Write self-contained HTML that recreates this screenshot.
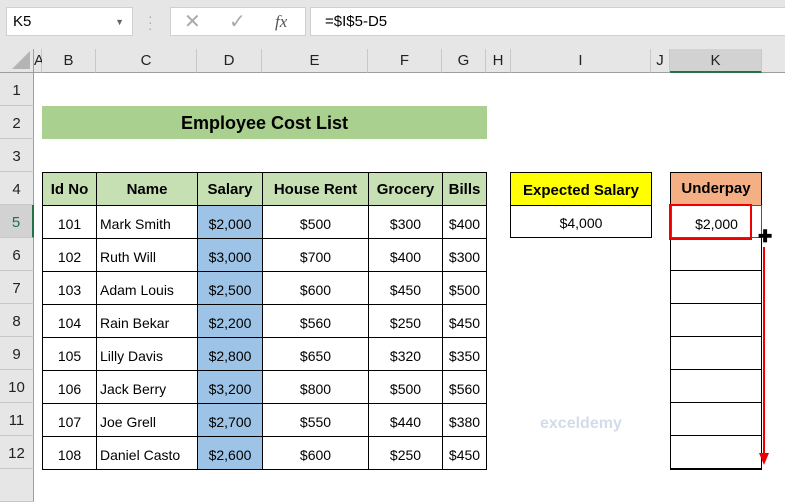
<!DOCTYPE html><html><head><style>
body{margin:0;width:785px;height:485px;overflow:hidden;background:#fff;font-family:"Liberation Sans",Calibri,sans-serif;position:relative}
.a{position:absolute;box-sizing:border-box}
.top{left:0;top:0;width:785px;height:49px;background:#e6e6e6}
.ch{top:49px;height:24px;background:#e6e6e6;border-right:1px solid #c8c8c8;border-bottom:1px solid #9e9e9e;font-size:15px;text-align:center;line-height:24px;color:#222}
.rh{left:0;width:34px;height:33px;background:#e6e6e6;border-bottom:1px solid #c8c8c8;border-right:1px solid #9e9e9e;font-size:15px;text-align:center;line-height:36px;color:#222}
.g{display:grid;grid-template-columns:53px 100px 64px 105px 73px 43px;grid-auto-rows:32px;gap:1px;padding:1px;background:#000}
.g div{background:#fff;font-size:14px;line-height:36px;text-align:center;white-space:nowrap;overflow:hidden}
.g .h{background:#c6e0b4;font-weight:bold;font-size:15px;line-height:33px}
.g .l{text-align:left;padding-left:3px}
.g .s{background:#9dc3e6}
</style></head><body>
<div class="a top"></div>
<div class="a" style="left:6px;top:7px;width:127px;height:29px;background:#fff;border:1px solid #d0d0d0;font-size:15px;line-height:28px;padding-left:6px">K5<span style="position:absolute;right:8px;top:0;font-size:9px;color:#666">▼</span></div>
<div class="a" style="left:148px;top:13px;color:#aaa;font-size:14px;line-height:6px">·<br>·<br>·</div>
<div class="a" style="left:170px;top:7px;width:136px;height:29px;background:#fff;border:1px solid #d0d0d0;color:#aaa;font-size:20px;line-height:28px"><span style="position:absolute;left:13px">✕</span><span style="position:absolute;left:58px">✓</span><span style="position:absolute;left:104px;font-family:'Liberation Serif';font-style:italic;color:#555;font-size:17px">fx</span></div>
<div class="a" style="left:310px;top:7px;width:480px;height:29px;background:#fff;border:1px solid #d0d0d0;font-size:15px;line-height:28px;padding-left:14px">=$I$5-D5</div>
<div class="a" style="left:0;top:49px;width:34px;height:24px;background:#e6e6e6;border-right:1px solid #9e9e9e;border-bottom:1px solid #9e9e9e"><div style="position:absolute;right:3px;bottom:3px;width:0;height:0;border-left:18px solid transparent;border-bottom:18px solid #b4b4b4"></div></div>
<div class="a ch" style="left:34px;width:8px">A</div>
<div class="a ch" style="left:42px;width:54px">B</div>
<div class="a ch" style="left:96px;width:101px">C</div>
<div class="a ch" style="left:197px;width:65px">D</div>
<div class="a ch" style="left:262px;width:106px">E</div>
<div class="a ch" style="left:368px;width:74px">F</div>
<div class="a ch" style="left:442px;width:44px">G</div>
<div class="a ch" style="left:486px;width:25px">H</div>
<div class="a ch" style="left:511px;width:140px">I</div>
<div class="a ch" style="left:651px;width:19px">J</div>
<div class="a ch" style="left:670px;width:92px;background:#d2d2d2;border-bottom:2px solid #217346">K</div>
<div class="a ch" style="left:762px;width:30px"></div>
<div class="a rh" style="top:73px">1</div><div class="a rh" style="top:106px">2</div><div class="a rh" style="top:139px">3</div><div class="a rh" style="top:172px">4</div><div class="a rh" style="top:205px;background:#d2d2d2;border-right:2px solid #217346;color:#217346">5</div><div class="a rh" style="top:238px">6</div><div class="a rh" style="top:271px">7</div><div class="a rh" style="top:304px">8</div><div class="a rh" style="top:337px">9</div><div class="a rh" style="top:370px">10</div><div class="a rh" style="top:403px">11</div><div class="a rh" style="top:436px">12</div><div class="a rh" style="top:469px"></div>
<div class="a" style="left:42px;top:106px;width:445px;height:33px;background:#a9d08e;font-weight:bold;font-size:18px;text-align:center;line-height:34px">Employee Cost List</div>
<div class="a g" style="left:42px;top:172px">
<div class="h">Id No</div><div class="h">Name</div><div class="h">Salary</div><div class="h">House Rent</div><div class="h">Grocery</div><div class="h">Bills</div>
<div>101</div><div class="l">Mark Smith</div><div class="s">$2,000</div><div>$500</div><div>$300</div><div>$400</div>
<div>102</div><div class="l">Ruth Will</div><div class="s">$3,000</div><div>$700</div><div>$400</div><div>$300</div>
<div>103</div><div class="l">Adam Louis</div><div class="s">$2,500</div><div>$600</div><div>$450</div><div>$500</div>
<div>104</div><div class="l">Rain Bekar</div><div class="s">$2,200</div><div>$560</div><div>$250</div><div>$450</div>
<div>105</div><div class="l">Lilly Davis</div><div class="s">$2,800</div><div>$650</div><div>$320</div><div>$350</div>
<div>106</div><div class="l">Jack Berry</div><div class="s">$3,200</div><div>$800</div><div>$500</div><div>$560</div>
<div>107</div><div class="l">Joe Grell</div><div class="s">$2,700</div><div>$550</div><div>$440</div><div>$380</div>
<div>108</div><div class="l">Daniel Casto</div><div class="s">$2,600</div><div>$600</div><div>$250</div><div>$450</div>
</div>
<div class="a" style="left:510px;top:172px;width:142px;height:34px;border:1px solid #000;background:#ff0;font-weight:bold;font-size:15px;text-align:center;line-height:36px">Expected Salary</div>
<div class="a" style="left:510px;top:205px;width:142px;height:33px;border:1px solid #000;border-top:none;font-size:14px;text-align:center;line-height:36px">$4,000</div>
<div class="a" style="left:670px;top:172px;width:92px;height:34px;border:1px solid #000;background:#f4b084;font-weight:bold;font-size:15px;text-align:center;line-height:32px">Underpay</div>
<div class="a" style="left:670px;top:205px;width:92px;height:265px;border:1px solid #000;border-top:none;background:repeating-linear-gradient(to bottom,transparent 0,transparent 32px,#000 32px,#000 33px)"></div>
<div class="a" style="left:671px;top:205px;width:91px;height:33px;background:#fff;border:1px solid #217346;font-size:14px;text-align:center;line-height:36px">$2,000</div>
<div class="a" style="left:669px;top:204px;width:83px;height:36px;border:2px solid #e00"></div>
<div class="a" style="left:758px;top:230px;font-size:17px;font-weight:bold;line-height:14px">✚</div>
<div class="a" style="left:763px;top:247px;width:2px;height:210px;background:#e00"></div>
<div class="a" style="left:759px;top:453px;width:0;height:0;border-left:5px solid transparent;border-right:5px solid transparent;border-top:12px solid #e00"></div>
<div class="a" style="left:540px;top:415px;color:#c8d4e4;font-size:16px;font-weight:bold;opacity:.8">exceldemy</div>
</body></html>
